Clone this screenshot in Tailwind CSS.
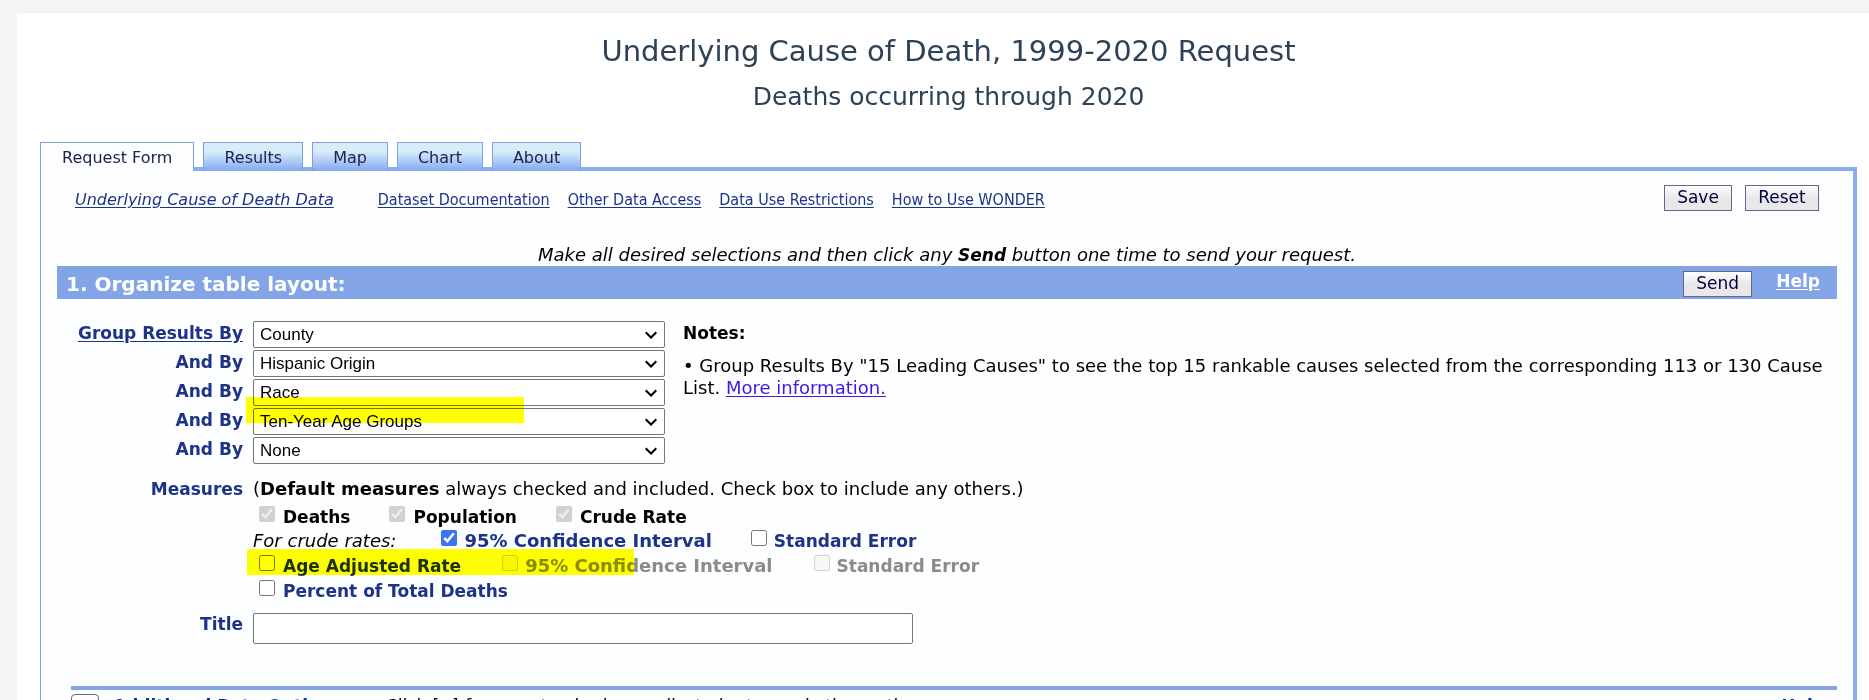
<!DOCTYPE html>
<html lang="en">
<head>
<meta charset="utf-8">
<title>Underlying Cause of Death, 1999-2020 Request</title>
<script src="https://cdn.jsdelivr.net/npm/@tailwindcss/browser@4"></script>
</head>
<body class="h-screen overflow-hidden bg-[#f4f4f4] pt-[13px] pl-[17px] font-['DejaVu_Sans',Verdana,sans-serif] text-[17px] leading-[22px] text-black">
<div class="min-h-screen bg-white pr-3 pl-[23px]">
  <header class="pt-5 text-center text-[#2d4257]">
    <h1 class="text-[29px] leading-9">Underlying Cause of Death, 1999-2020 Request</h1>
    <h2 class="mt-3 text-[25px] leading-8">Deaths occurring through 2020</h2>
  </header>

  <nav class="mt-[29px] flex h-[29px] items-stretch text-[16px] text-[#22224e]" aria-label="Sections">
    <a href="#request" class="flex items-center border border-b-0 border-[#7ea1e0] bg-[#fdfeff] px-[21px] pt-[2px]">Request Form</a>
    <span class="w-[9px] border-b-4 border-[#8aadf2]"></span>
    <a href="#results" class="flex items-center border border-b-0 border-[#7ea1e0] bg-linear-to-b from-[#d8edfb] from-30% to-[#86a8ee] px-5 pt-[2px]">Results</a>
    <span class="w-[9px] border-b-4 border-[#8aadf2]"></span>
    <a href="#map" class="flex items-center border border-b-0 border-[#7ea1e0] bg-linear-to-b from-[#d8edfb] from-30% to-[#86a8ee] px-5 pt-[2px]">Map</a>
    <span class="w-[9px] border-b-4 border-[#8aadf2]"></span>
    <a href="#chart" class="flex items-center border border-b-0 border-[#7ea1e0] bg-linear-to-b from-[#d8edfb] from-30% to-[#86a8ee] px-5 pt-[2px]">Chart</a>
    <span class="w-[9px] border-b-4 border-[#8aadf2]"></span>
    <a href="#about" class="flex items-center border border-b-0 border-[#7ea1e0] bg-linear-to-b from-[#d8edfb] from-30% to-[#86a8ee] px-5 pt-[2px]">About</a>
    <span class="flex-1 border-b-4 border-[#8aadf2]"></span>
  </nav>

  <main class="min-h-screen border-r-4 border-l border-r-[#8aadf2] border-l-[#7ea1e0] bg-[#fdfeff] pr-4 pl-4">
    <div class="flex items-start pt-[14px] pr-[18px] pl-[18px] text-[#1c3388]">
      <a href="#data" class="mt-[4px] text-[16px] italic underline underline-offset-2">Underlying Cause of Death Data</a>
      <div class="mt-[4px] ml-11 flex gap-[18px] font-['DejaVu_Sans_Condensed','DejaVu_Sans',Tahoma,sans-serif] text-[16px]">
        <a href="#doc" class="underline underline-offset-2">Dataset Documentation</a>
        <a href="#other" class="underline underline-offset-2">Other Data Access</a>
        <a href="#restrictions" class="underline underline-offset-2">Data Use Restrictions</a>
        <a href="#howto" class="underline underline-offset-2">How to Use WONDER</a>
      </div>
      <div class="ml-auto flex gap-[13px] text-[#000040]">
        <button type="button" class="h-[26px] w-[68px] border border-[#66668c] bg-linear-to-b from-white to-[#e8e8e8] to-50% pb-[2px]">Save</button>
        <button type="button" class="h-[26px] w-[74px] border border-[#66668c] bg-linear-to-b from-white to-[#e8e8e8] to-50% pb-[2px]">Reset</button>
      </div>
    </div>

    <p class="mt-[33px] text-center text-[18px] italic">Make all desired selections and then click any <b class="text-[17px]">Send</b> button one time to send your request.</p>

    <section>
      <div class="flex h-[33px] items-center bg-[#83a5e8] pr-[17px] pl-[9px] font-bold text-white">
        <h3 class="pt-[2px] text-[20px]">1. Organize table layout:</h3>
        <button type="submit" form="request-form" class="mt-[2px] ml-auto h-[26px] w-[69px] border border-[#66668c] bg-linear-to-b from-white to-[#e8e8e8] to-50% pb-[2px] font-normal text-[#000040]">Send</button>
        <a href="#help" class="mb-1 ml-6 underline underline-offset-2">Help</a>
      </div>

      <form id="request-form" class="relative grid grid-cols-[186px_minmax(0,1fr)] gap-x-[10px] pt-[22px] text-[#1c3388]">
        <div class="grid auto-rows-[27px] gap-y-[2px] text-right font-bold leading-[24px]">
          <label for="g1"><a href="#group" class="underline underline-offset-2">Group Results By</a></label>
          <label for="g2">And By</label>
          <label for="g3">And By</label>
          <label for="g4">And By</label>
          <label for="g5">And By</label>
        </div>
        <div class="flex gap-[18px]">
          <div class="grid w-[412px] shrink-0 auto-rows-[27px] gap-y-[2px] font-['Liberation_Sans',Arial,sans-serif] text-[17px] text-black">
            <div class="grid items-center"><select id="g1" class="col-start-1 row-start-1 h-full w-full appearance-none rounded-xs border border-[#767676] bg-white pr-8 pl-[6px]"><option>County</option></select><svg class="pointer-events-none col-start-1 row-start-1 mr-2 h-3 w-3 justify-self-end" viewBox="0 0 12 12" fill="none" stroke="black" stroke-width="2"><path d="M0.7 3.2 6 8.5l5.300-5.300"/></svg></div>
            <div class="grid items-center"><select id="g2" class="col-start-1 row-start-1 h-full w-full appearance-none rounded-xs border border-[#767676] bg-white pr-8 pl-[6px]"><option>Hispanic Origin</option></select><svg class="pointer-events-none col-start-1 row-start-1 mr-2 h-3 w-3 justify-self-end" viewBox="0 0 12 12" fill="none" stroke="black" stroke-width="2"><path d="M0.7 3.2 6 8.5l5.300-5.300"/></svg></div>
            <div class="grid items-center"><select id="g3" class="col-start-1 row-start-1 h-full w-full appearance-none rounded-xs border border-[#767676] bg-white pr-8 pl-[6px]"><option>Race</option></select><svg class="pointer-events-none col-start-1 row-start-1 mr-2 h-3 w-3 justify-self-end" viewBox="0 0 12 12" fill="none" stroke="black" stroke-width="2"><path d="M0.7 3.2 6 8.5l5.300-5.300"/></svg></div>
            <div class="grid items-center"><select id="g4" class="col-start-1 row-start-1 h-full w-full appearance-none rounded-xs border border-[#767676] bg-white pr-8 pl-[6px]"><option>Ten-Year Age Groups</option></select><svg class="pointer-events-none col-start-1 row-start-1 mr-2 h-3 w-3 justify-self-end" viewBox="0 0 12 12" fill="none" stroke="black" stroke-width="2"><path d="M0.7 3.2 6 8.5l5.300-5.300"/></svg></div>
            <div class="grid items-center"><select id="g5" class="col-start-1 row-start-1 h-full w-full appearance-none rounded-xs border border-[#767676] bg-white pr-8 pl-[6px]"><option>None</option></select><svg class="pointer-events-none col-start-1 row-start-1 mr-2 h-3 w-3 justify-self-end" viewBox="0 0 12 12" fill="none" stroke="black" stroke-width="2"><path d="M0.7 3.2 6 8.5l5.300-5.300"/></svg></div>
          </div>
          <div class="min-w-0 flex-1 pt-[1px] text-black">
            <p class="font-bold">Notes:</p>
            <p class="mt-[11px] text-[18px]">• Group Results By "15 Leading Causes" to see the top 15 rankable causes selected from the corresponding 113 or 130 Cause List. <a href="#more" class="text-[#3a1ae8] underline underline-offset-2">More information.</a></p>
          </div>
        </div>

        <div class="mt-[14px] text-right font-bold">Measures</div>
        <div class="mt-[14px] font-bold">
          <p class="text-[18px] font-normal text-black">(<b>Default measures</b> always checked and included. Check box to include any others.)</p>
          <div class="mt-[3px] flex h-[25px] gap-[39px] pl-[6px] text-black">
            <label class="flex gap-2 pt-[3px]"><input type="checkbox" checked disabled class="h-4 w-4">Deaths</label>
            <label class="flex gap-2 pt-[3px]"><input type="checkbox" checked disabled class="h-4 w-4">Population</label>
            <label class="flex gap-2 pt-[3px]"><input type="checkbox" checked disabled class="h-4 w-4">Crude Rate</label>
          </div>
          <div class="flex h-[25px] gap-[39px] pt-[2px]">
            <span class="mr-[6px] text-[18px] font-normal text-black italic">For crude rates:</span>
            <label class="flex gap-[7px] text-[18px]"><input type="checkbox" checked class="h-4 w-4 accent-[#3b72f6]">95% Confidence Interval</label>
            <label class="flex gap-[7px]"><input type="checkbox" class="h-4 w-4">Standard Error</label>
          </div>
          <div class="flex h-[25px] gap-[41px] pt-[2px] pl-[6px]">
            <label class="flex gap-2"><input type="checkbox" class="h-4 w-4">Age Adjusted Rate</label>
            <label class="flex gap-[7px] text-[18px] text-[#8b8b8b]"><input type="checkbox" disabled class="h-4 w-4">95% Confidence Interval</label>
            <label class="flex gap-[7px] text-[#8b8b8b]"><input type="checkbox" disabled class="h-4 w-4">Standard Error</label>
          </div>
          <div class="flex h-[25px] pt-[2px] pl-[6px]">
            <label class="flex gap-2"><input type="checkbox" class="h-4 w-4">Percent of Total Deaths</label>
          </div>
        </div>

        <label for="title" class="mt-[10px] text-right font-bold">Title</label>
        <input id="title" type="text" class="mt-[10px] h-[31px] w-[660px] rounded-xs border border-[#767676] bg-white px-2 text-black">

        <!-- marker strokes over the age rows -->
        <span class="pointer-events-none absolute top-[98px] left-[189px] h-[26px] w-[278px] bg-[#ffff00] mix-blend-multiply"></span>
        <span class="pointer-events-none absolute top-[250px] left-[190px] h-[26px] w-[387px] bg-[#ffff00] mix-blend-multiply"></span>
      </form>
    </section>

    <section class="mt-[42px] ml-[14px] flex items-start border-t-4 border-[#83a5e8] pt-1 pr-3">
      <button type="button" aria-label="Expand" class="h-7 w-7 rounded-sm border border-[#66668c] bg-white"></button>
      <a href="#rates" class="mt-[1px] ml-[14px] font-bold text-[#1c3388]">Additional Rate Options:</a>
      <span class="mt-[1px] ml-9 italic">Click [+] for non-standard age adjusted rates and other options</span>
      <a href="#help2" class="mt-[1px] ml-auto font-bold text-[#1c3388]">Help</a>
    </section>
  </main>
</div>
</body>
</html>
